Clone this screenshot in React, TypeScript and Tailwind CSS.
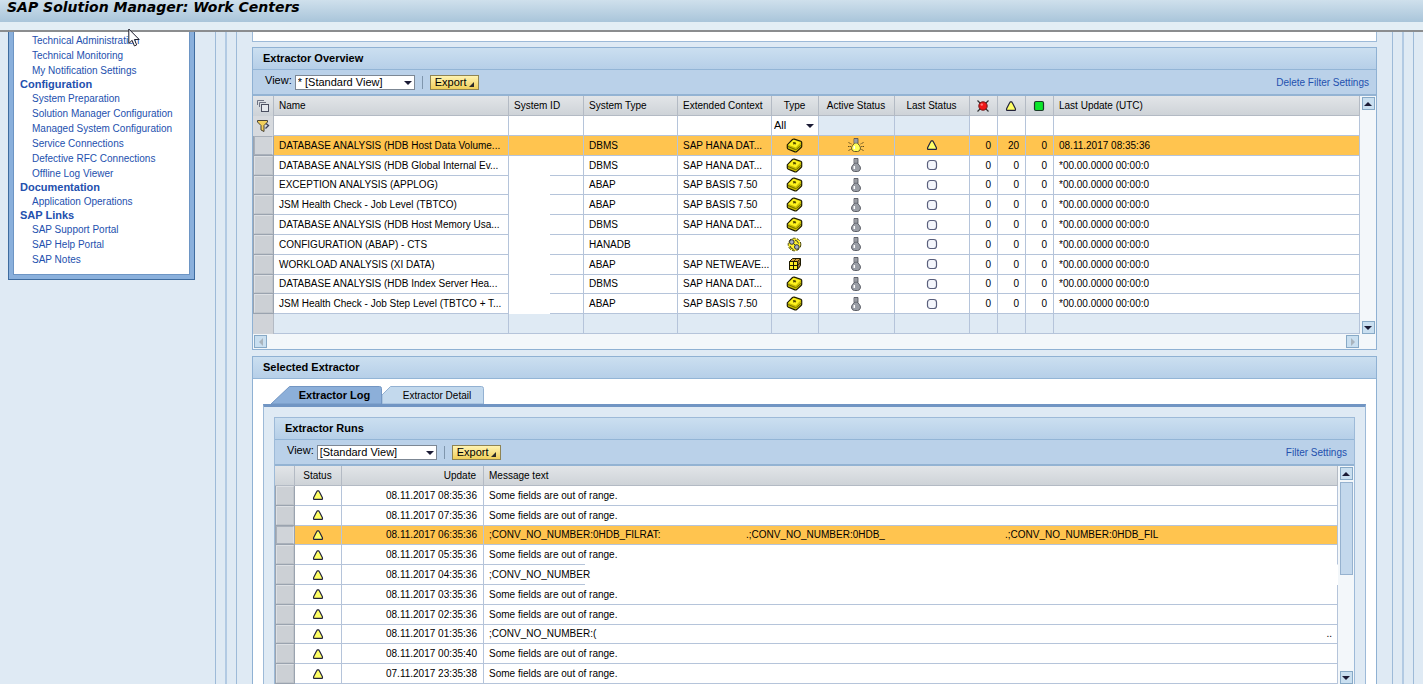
import type { ReactNode } from 'react'

type RowType = 'db' | 'globe' | 'cube'

interface Extractor {
  name: string
  system: string
  context: string
  type: RowType
  active?: boolean
  warnings?: number
  updated: string
}

interface Run {
  time: string
  parts: { text: string; className: string }[]
  selected?: boolean
  shortLine?: boolean
  openEnd?: boolean
}

const NEVER = '*00.00.0000 00:00:0'
const OUT_OF_RANGE = [{ text: 'Some fields are out of range.', className: '' }]

const NAV = [
  { title: '', links: ['Technical Administration', 'Technical Monitoring', 'My Notification Settings'] },
  {
    title: 'Configuration',
    links: [
      'System Preparation',
      'Solution Manager Configuration',
      'Managed System Configuration',
      'Service Connections',
      'Defective RFC Connections',
      'Offline Log Viewer',
    ],
  },
  { title: 'Documentation', links: ['Application Operations'] },
  { title: 'SAP Links', links: ['SAP Support Portal', 'SAP Help Portal', 'SAP Notes'] },
]

const EXTRACTORS: Extractor[] = [
  { name: 'DATABASE ANALYSIS (HDB Host Data Volume...', system: 'DBMS', context: 'SAP HANA DAT...', type: 'db', active: true, warnings: 20, updated: '08.11.2017 08:35:36' },
  { name: 'DATABASE ANALYSIS (HDB Global Internal Ev...', system: 'DBMS', context: 'SAP HANA DAT...', type: 'db', updated: NEVER },
  { name: 'EXCEPTION ANALYSIS (APPLOG)', system: 'ABAP', context: 'SAP BASIS 7.50', type: 'db', updated: NEVER },
  { name: 'JSM Health Check - Job Level (TBTCO)', system: 'ABAP', context: 'SAP BASIS 7.50', type: 'db', updated: NEVER },
  { name: 'DATABASE ANALYSIS (HDB Host Memory Usa...', system: 'DBMS', context: 'SAP HANA DAT...', type: 'db', updated: NEVER },
  { name: 'CONFIGURATION (ABAP) - CTS', system: 'HANADB', context: '', type: 'globe', updated: NEVER },
  { name: 'WORKLOAD ANALYSIS (XI DATA)', system: 'ABAP', context: 'SAP NETWEAVE...', type: 'cube', updated: NEVER },
  { name: 'DATABASE ANALYSIS (HDB Index Server Hea...', system: 'DBMS', context: 'SAP HANA DAT...', type: 'db', updated: NEVER },
  { name: 'JSM Health Check - Job Step Level (TBTCO + T...', system: 'ABAP', context: 'SAP BASIS 7.50', type: 'db', updated: NEVER },
]

const RUNS: Run[] = [
  { time: '08.11.2017 08:35:36', parts: OUT_OF_RANGE },
  { time: '08.11.2017 07:35:36', parts: OUT_OF_RANGE },
  {
    time: '08.11.2017 06:35:36',
    selected: true,
    parts: [
      { text: ';CONV_NO_NUMBER:0HDB_FILRAT:', className: 'w-[257px]' },
      { text: '.;CONV_NO_NUMBER:0HDB_', className: 'w-[259px]' },
      { text: '.;CONV_NO_NUMBER:0HDB_FIL', className: '' },
    ],
  },
  { time: '08.11.2017 05:35:36', parts: OUT_OF_RANGE, shortLine: true },
  { time: '08.11.2017 04:35:36', parts: [{ text: ';CONV_NO_NUMBER', className: '' }], shortLine: true, openEnd: true },
  { time: '08.11.2017 03:35:36', parts: OUT_OF_RANGE },
  { time: '08.11.2017 02:35:36', parts: OUT_OF_RANGE },
  {
    time: '08.11.2017 01:35:36',
    parts: [
      { text: ';CONV_NO_NUMBER:(', className: 'flex-1' },
      { text: '..', className: '' },
    ],
  },
  { time: '08.11.2017 00:35:40', parts: OUT_OF_RANGE },
  { time: '07.11.2017 23:35:38', parts: OUT_OF_RANGE },
]

function WarningIcon() {
  return (
    <svg className="mx-auto block" width="12" height="12" viewBox="0 0 12 12" aria-hidden="true">
      <path
        d="M5.300 1.800h1.400L8 4l2.300 4.500q.6 1.900-.8 1.900h-7q-1.400 0-.8-1.900L4 4z"
        fill="#ffff66"
        stroke="#22223c"
        strokeWidth="1.200"
        strokeLinejoin="round"
      />
    </svg>
  )
}

function ErrorIcon() {
  return (
    <svg className="mx-auto block" width="14" height="14" viewBox="0 0 14 14" aria-hidden="true">
      <path d="M1.500 1.500l11 11M12.500 1.500l-11 11" stroke="#333" strokeWidth="1.200" />
      <circle cx="7" cy="7" r="4.200" fill="#f01818" stroke="#6d1313" />
      <circle cx="5.800" cy="5.600" r="1.200" fill="#ff7d7d" />
    </svg>
  )
}

function OkIcon() {
  return (
    <svg className="mx-auto block" width="12" height="12" viewBox="0 0 12 12" aria-hidden="true">
      <rect x="1.500" y="1.500" width="9" height="9" rx="1.500" fill="#0be62b" stroke="#1b3a28" strokeWidth="1.200" />
    </svg>
  )
}

function IdleIcon() {
  return (
    <svg className="mx-auto block" width="12" height="12" viewBox="0 0 12 12" aria-hidden="true">
      <rect x="1.500" y="1.500" width="9" height="9" rx="2.800" fill="#f4f6fc" stroke="#5a5f7c" strokeWidth="1.200" />
    </svg>
  )
}

function BulbIcon({ on = false }: { on?: boolean }) {
  return (
    <svg className="mx-auto block" width="18" height="16" viewBox="0 0 18 16" aria-hidden="true">
      {on && (
        <path
          d="M1.500 5.500l3 1.500M1 9.500h3M1.500 13.500l3-1.500M16.500 5.500l-3 1.500M17 9.500h-3M16.500 13.500l-3-1.500"
          stroke="#5c4a1c"
          strokeDasharray="1.500 .7"
        />
      )}
      <path
        d="M7.500 5.500Q7.300 7 5.700 8.300Q4.200 10 4.600 12Q5.300 14.500 7.500 14.500h3Q12.700 14.500 13.400 12Q13.800 10 12.300 8.300Q10.700 7 10.500 5.500z"
        fill={on ? '#ffff59' : '#9a9ea6'}
        stroke={on ? '#6b5a23' : '#5d6068'}
      />
      <path d="M7 1.500h4v4.500H7z" fill="#7d8087" stroke="#4a4d55" strokeWidth=".8" />
      <path d="M7 3h3.500M7 5h3.500" stroke="#c5c8ce" strokeWidth=".8" />
      <path d="M7.300 9v3" stroke="#fff" strokeWidth="1.500" />
    </svg>
  )
}

function TypeIcon({ type }: { type: RowType }) {
  if (type === 'cube') {
    return (
      <svg className="mx-auto block" width="14" height="14" viewBox="0 0 14 14" aria-hidden="true">
        <path d="M1.500 4.500l3-3h8v7l-3 4h-8z" fill="#d2a13e" stroke="#1d1900" />
        <path d="M1.500 4.500h8v8h-8z" fill="#ffee24" stroke="#1d1900" />
        <path d="M5.500 4.500v8M1.500 8.500h8" stroke="#1d1900" fill="none" />
        <path d="M5.500 4.500l3-3M11 3v8M9.500 4.500l3-3M9.500 8.500l3-3" stroke="#1d1900" strokeWidth=".7" fill="none" />
      </svg>
    )
  }
  if (type === 'globe') {
    return (
      <svg className="mx-auto block" width="15" height="15" viewBox="0 0 15 15" aria-hidden="true">
        <circle cx="7.500" cy="7.500" r="6.300" fill="#fff02a" stroke="#3d3900" strokeDasharray="3 1.500" />
        <circle cx="4.800" cy="5" r="2.300" fill="#aab0c2" stroke="#2b2e3d" />
        <circle cx="9.800" cy="10" r="2.300" fill="#aab0c2" stroke="#2b2e3d" />
        <path d="M8 3q3 1 3.500 3.500M3 9q.5 2.500 3.500 3.500M6.500 6.500L8 8" fill="none" stroke="#2b2e3d" />
      </svg>
    )
  }
  return (
    <svg className="mx-auto block" width="17" height="15" viewBox="0 0 17 15" aria-hidden="true">
      <path
        d="M1.300 6.800L6.500 1.500q.8-.7 1.800-.4l6.500 2.200q.9.400.9 1.300v3.700q0 .7-.6 1.200l-4.400 4.100q-.8.600-1.800.3l-6.500-2.600q-1-.4-1.100-1.300z"
        fill="#c9be00"
        stroke="#1f1c00"
        strokeWidth="1.200"
      />
      <path d="M2.300 6.700L7 2.200q.6-.3 1.200-.1l6.300 2.300-4.700 5z" fill="#fff21f" />
      <path d="M2 8.500l7.800 3.200M10.300 11.500l5-4.500" fill="none" stroke="#5c5500" strokeWidth=".8" />
      <path d="M7 4.500l3 1.500M9.300 4l-1.800 2.400" stroke="#4a4500" strokeWidth="1.200" />
    </svg>
  )
}

function Caret({ dir, color = '#1b1b35' }: { dir: 'up' | 'down' | 'left' | 'right'; color?: string }) {
  const paths = { up: 'M0 6l4-4 4 4z', down: 'M0 2h8L4 6z', left: 'M6 0v8L2 4z', right: 'M2 0l4 4-4 4z' }
  return (
    <svg width="8" height="8" viewBox="0 0 8 8" aria-hidden="true">
      <path d={paths[dir]} fill={color} />
    </svg>
  )
}

function ScrollButton({ dir, disabled }: { dir: 'up' | 'down' | 'left' | 'right'; disabled?: boolean }) {
  return (
    <button
      type="button"
      aria-label={`Scroll ${dir}`}
      disabled={disabled}
      className="flex size-[13px] shrink-0 items-center justify-center border border-[#87a9c6] bg-[#c9dff0]"
    >
      <Caret dir={dir} color={disabled ? '#a9b4bd' : undefined} />
    </button>
  )
}

function PanelTitle({ children }: { children: ReactNode }) {
  return (
    <h2 className="h-[22px] border-b border-[#93b5d6] bg-linear-to-b from-[#cbdff0] to-[#b6cfe8] pl-[10px] text-[11px] leading-5 font-bold">
      {children}
    </h2>
  )
}

function Toolbar({ id, view, link }: { id: string; view: string; link: string }) {
  return (
    <div className="flex h-[26px] items-center border-b-2 border-[#93b3d3] bg-[#bad1e9] pr-[7px] pl-3">
      <label htmlFor={id} className="pb-1 text-[11px]">View:</label>
      <div className="relative ml-[3px]">
        <select
          id={id}
          defaultValue={view}
          className="block h-[15px] w-[120px] appearance-none rounded-none border border-[#7c8794] bg-white pl-[2px] text-[11px] leading-[13px]"
        >
          <option>{view}</option>
        </select>
        <span className="pointer-events-none absolute top-[4px] right-[3px]">
          <Caret dir="down" />
        </span>
      </div>
      <span className="mx-[7px] h-[13px] w-px bg-[#7f96ad]" />
      <button
        type="button"
        className="flex h-[15px] items-center gap-[2px] border border-[#8f8454] bg-linear-to-b from-[#fff3b0] to-[#f0cf58] px-1 text-[11px] leading-[13px]"
      >
        Export
        <svg className="mt-1" width="5" height="5" viewBox="0 0 5 5" aria-hidden="true">
          <path d="M5 0v5H0z" fill="#2b2a2a" />
        </svg>
      </button>
      <a href="#" className="ml-auto text-[#2350ae]">{link}</a>
    </div>
  )
}

function SelectCell({ pressed, label }: { pressed?: boolean; label: string }) {
  return (
    <td className="h-px bg-[#9aa3af] p-0 pr-px pb-px pl-px">
      <button
        type="button"
        aria-label={label}
        className={`block h-full w-full border ${
          pressed ? 'border-[#a9b0ba] border-r-[#dde0e4] bg-[#d0d4d9]' : 'border-[#dde0e4] border-r-[#bfc4ca] border-b-[#bfc4ca] bg-[#ccd0d5]'
        }`}
      />
    </td>
  )
}

const CELL = 'border-r border-b border-[#b5c4da] py-0 pl-[5px] whitespace-nowrap'
const NUM = `${CELL} pr-[6px] text-right`
const ICON = 'border-r border-b border-[#b5c4da] p-0 pr-px'
const HEAD = 'border-r border-b border-[#b3bac4] py-0 font-normal whitespace-nowrap'
const HEAD_LEFT = `${HEAD} pl-[5px] text-left`
const HEAD_CENTER = `${HEAD} pr-px text-center`

function ExtractorTable() {
  return (
    <table className="h-[238px] w-full table-fixed border-separate border-spacing-0">
      <colgroup>
        <col className="w-[21px]" />
        <col className="w-[235px]" />
        <col className="w-[75px]" />
        <col className="w-[94px]" />
        <col className="w-[94px]" />
        <col className="w-[47px]" />
        <col className="w-[76px]" />
        <col className="w-[75px]" />
        <col className="w-[28px]" />
        <col className="w-[28px]" />
        <col className="w-[28px]" />
        <col />
      </colgroup>
      <thead>
        <tr className="h-5 bg-linear-to-b from-[#e2e5e8] to-[#cdd2d7]">
          <th className="border-r border-[#b3bac4] p-0">
            <svg className="mx-auto block" width="14" height="14" viewBox="0 0 14 14" aria-label="Select all">
              <path d="M1.500 6V1.500H8M3.500 8V3.500H10" fill="none" stroke="#6f7383" />
              <rect x="5.500" y="5.500" width="7" height="7" fill="#e5e8ec" stroke="#4b4f60" />
            </svg>
          </th>
          <th className={HEAD_LEFT}>Name</th>
          <th className={HEAD_LEFT}>System ID</th>
          <th className={HEAD_LEFT}>System Type</th>
          <th className={HEAD_LEFT}>Extended Context</th>
          <th className={HEAD_CENTER}>Type</th>
          <th className={HEAD_CENTER}>Active Status</th>
          <th className={HEAD_CENTER}>Last Status</th>
          <th className={HEAD_CENTER}><ErrorIcon /></th>
          <th className={HEAD_CENTER}><WarningIcon /></th>
          <th className={HEAD_CENTER}><OkIcon /></th>
          <th className={HEAD_LEFT}>Last Update (UTC)</th>
        </tr>
        <tr className="h-5 bg-white">
          <td className="border-r border-[#b3bac4] bg-[#d7dade] p-0">
            <svg className="mx-auto block" width="14" height="14" viewBox="0 0 14 14" aria-label="Filter">
              <path d="M1.500 1.500h10v1.500L8 6.500v6l-3-1.500V6.500L1.500 3z" fill="#f2cf5b" stroke="#4a4334" />
              <path d="M10 4.500l2.500 2L9.500 9.500" fill="none" stroke="#3c3f55" strokeWidth="1.300" />
            </svg>
          </td>
          <td className={CELL} />
          <td className={CELL} />
          <td className={CELL} />
          <td className={CELL} />
          <td className={ICON}>
            <div className="relative">
              <select aria-label="Type" className="block w-full appearance-none pl-[2px] text-[11px] leading-[13px]">
                <option>All</option>
              </select>
              <span className="pointer-events-none absolute top-[3px] right-[3px]">
                <Caret dir="down" />
              </span>
            </div>
          </td>
          <td className={`${CELL} bg-[#dfeaf4]`} />
          <td className={`${CELL} bg-[#dfeaf4]`} />
          <td className={CELL} />
          <td className={CELL} />
          <td className={CELL} />
          <td className={CELL} />
        </tr>
      </thead>
      <tbody>
        {EXTRACTORS.map((row) => (
          <tr key={row.name} className={`h-[19px] ${row.active ? 'bg-[#ffc44f]' : 'bg-white'}`}>
            <SelectCell pressed={row.active} label={`Select ${row.name}`} />
            <td className={CELL}>{row.name}</td>
            {row.active ? (
              <td className={CELL} />
            ) : (
              <td className="border-r border-[#b5c4da] bg-[linear-gradient(to_right,transparent_41px,#b5c4da_41px)] bg-[length:100%_1px] bg-bottom bg-no-repeat p-0" />
            )}
            <td className={CELL}>{row.system}</td>
            <td className={CELL}>{row.context}</td>
            <td className={ICON}><TypeIcon type={row.type} /></td>
            <td className={ICON}><BulbIcon on={row.active} /></td>
            <td className={ICON}>{row.active ? <WarningIcon /> : <IdleIcon />}</td>
            <td className={NUM}>0</td>
            <td className={NUM}>{row.warnings ?? 0}</td>
            <td className={NUM}>0</td>
            <td className={CELL}>{row.updated}</td>
          </tr>
        ))}
        <tr className="h-[19px] bg-[#dfeaf4]">
          <td className="border-r border-[#b3bac4] bg-[#d0d3d8]" />
          {Array.from({ length: 11 }, (_, i) => (
            <td key={i} className={CELL} />
          ))}
        </tr>
      </tbody>
    </table>
  )
}

function messageCellClass(run: Run) {
  if (!run.shortLine) return CELL
  const line =
    'border-b border-b-transparent bg-[linear-gradient(to_right,#b5c4da_101px,transparent_101px)] bg-[length:100%_1px] bg-bottom bg-no-repeat bg-origin-border py-0 pl-[5px] whitespace-nowrap'
  return run.openEnd ? line : `${line} border-r border-r-[#b5c4da]`
}

function RunsTable() {
  return (
    <table className="h-[218px] w-full table-fixed border-separate border-spacing-0">
      <colgroup>
        <col className="w-[20px]" />
        <col className="w-[47px]" />
        <col className="w-[142px]" />
        <col />
      </colgroup>
      <thead>
        <tr className="h-5 bg-linear-to-b from-[#e2e5e8] to-[#cdd2d7]">
          <th className={HEAD} />
          <th className={HEAD_CENTER}>Status</th>
          <th className={`${HEAD} pr-[7px] text-right`}>Update</th>
          <th className={HEAD_LEFT}>Message text</th>
        </tr>
      </thead>
      <tbody>
        {RUNS.map((run) => (
          <tr key={run.time} className={`h-[19px] ${run.selected ? 'bg-[#ffc44f]' : 'bg-white'}`}>
            <SelectCell pressed={run.selected} label={`Select run ${run.time}`} />
            <td className={ICON}><WarningIcon /></td>
            <td className={NUM}>{run.time}</td>
            <td className={messageCellClass(run)}>
              <div className="flex pr-[5px]">
                {run.parts.map((part) => (
                  <span key={part.text} className={part.className}>{part.text}</span>
                ))}
              </div>
            </td>
          </tr>
        ))}
      </tbody>
    </table>
  )
}

function Sidebar() {
  return (
    <nav className="w-[215px] shrink-0 pl-2" aria-label="Work center">
      <div className="w-[187px] border border-t-0 border-[#3f6c9f] bg-[#8ab0dc] px-1 pb-1">
        <div className="border border-t-0 border-[#6d95c4] bg-white pt-px pb-[7px] pl-[6px] text-[#2350ae]">
          {NAV.map((group) => (
            <div key={group.title}>
              {group.title && <h3 className="text-[11px] leading-[13px] font-bold">{group.title}</h3>}
              <ul className="pl-3">
                {group.links.map((link) => (
                  <li key={link} className="leading-[15px]">
                    <a href="#">{link}</a>
                  </li>
                ))}
              </ul>
            </div>
          ))}
        </div>
      </div>
    </nav>
  )
}

function Pointer() {
  return (
    <svg className="absolute top-7 left-32" width="13" height="20" viewBox="0 0 13 20" aria-hidden="true">
      <path d="M.8 1v14.500l3.300-3.200 2.300 5.600 2.300-1-2.300-5.400h4.800z" fill="#fff" stroke="#1c1c2c" />
    </svg>
  )
}

export default function App() {
  return (
    <div className="relative h-screen overflow-hidden bg-[#dfeaf4] font-['Liberation_Sans',Arial,sans-serif] text-[10px] leading-[13px] text-black">
      <header className="border-b-2 border-[#8b8d8f] bg-[#e3eef5]">
        <h1 className="h-[22px] bg-linear-to-b from-[#cfe0ec] to-[#a9c5da] pl-[7px] font-['DejaVu_Sans',sans-serif] text-[14px] leading-[14px] font-bold italic">
          SAP Solution Manager: Work Centers
        </h1>
        <div className="h-2" />
      </header>

      <div className="flex">
        <Sidebar />
        <div className="mr-[9px] min-w-0 flex-1 border-x border-[#9dbad8] px-[9px]">
          <div className="border-x-2 border-[#b2cae3] px-[9px]">
            <main className="border-x border-[#9dbad8] px-[15px]">
              <div className="h-[10px] border border-t-0 border-[#9dbad8] bg-white" />

              <section className="mt-[5px] border border-[#8fb1d3] bg-[#f3f7fa]">
                <PanelTitle>Extractor Overview</PanelTitle>
                <Toolbar id="overview-view" view="* [Standard View]" link="Delete Filter Settings" />
                <div className="flex">
                  <div className="min-w-0 flex-1">
                    <ExtractorTable />
                  </div>
                  <div className="flex w-[16px] flex-col items-center justify-between pt-[1px]">
                    <ScrollButton dir="up" />
                    <ScrollButton dir="down" />
                  </div>
                </div>
                <div className="flex h-[15px] items-center justify-between pr-[17px] pl-px">
                  <ScrollButton dir="left" disabled />
                  <ScrollButton dir="right" disabled />
                </div>
              </section>

              <section className="mt-[6px] border border-[#8fb1d3] bg-white px-[10px]">
                <div className="-mx-[10px]">
                  <PanelTitle>Selected Extractor</PanelTitle>
                </div>
                <div className="flex h-[25px] items-end pl-2" role="tablist">
                  <button type="button" role="tab" aria-selected="true" className="relative h-[18px] w-[111px] pl-4 text-[11px] font-bold">
                    <svg className="absolute inset-0" width="111" height="18" viewBox="0 0 111 18" aria-hidden="true">
                      <path d="M0 18L18.500 .5h90q2 0 2 2V18z" fill="#8cafd9" stroke="#7396c3" />
                    </svg>
                    <span className="relative">Extractor Log</span>
                  </button>
                  <button type="button" role="tab" aria-selected="false" className="relative h-[18px] w-[102px] pl-2">
                    <svg className="absolute inset-0" width="102" height="18" viewBox="0 0 102 18" aria-hidden="true">
                      <path d="M0 18V9L8.500 .5h91q2 0 2 2V18z" fill="#c3d9ed" stroke="#93b1d2" />
                    </svg>
                    <span className="relative">Extractor Detail</span>
                  </button>
                </div>

                <div className="border border-t-3 border-[#9dbad8] border-t-[#7195c3] bg-[#dfeaf4] px-[10px] pt-[10px]">
                  <section className="border border-[#9dbad8] bg-[#f3f7fa]">
                    <PanelTitle>Extractor Runs</PanelTitle>
                    <Toolbar id="runs-view" view="[Standard View]" link="Filter Settings" />
                    <div className="flex">
                      <div className="min-w-0 flex-1">
                        <RunsTable />
                      </div>
                      <div className="flex w-[16px] flex-col items-center pt-[1px]">
                        <ScrollButton dir="up" />
                        <div className="mt-[2px] h-[93px] w-[13px] border border-[#96b2cf] bg-[#c3d8ec]" />
                        <div className="flex-1" />
                        <ScrollButton dir="down" />
                      </div>
                    </div>
                  </section>
                </div>
              </section>
            </main>
          </div>
        </div>
      </div>

      <Pointer />
    </div>
  )
}
